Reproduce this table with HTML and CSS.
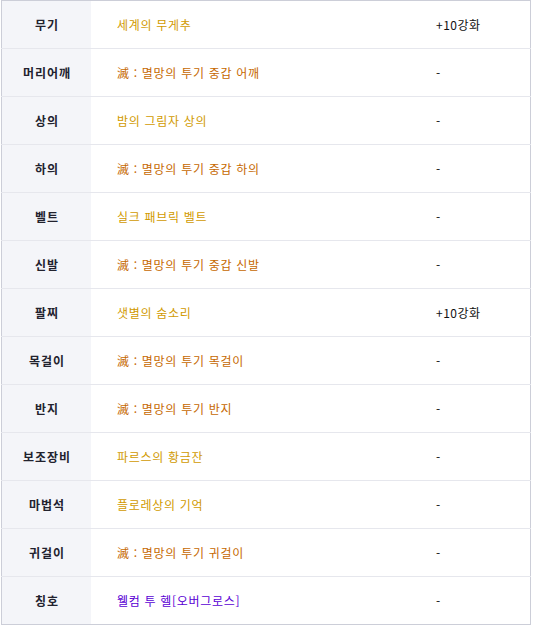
FILE: index.html
```html
<!DOCTYPE html>
<html lang="ko">
<head>
<meta charset="utf-8">
<link rel="stylesheet" href="styles.css">
</head>
<body>
<table class="equip">
  <tbody>
    <tr><th>무기</th><td class="item unique">세계의 무게추</td><td class="val">+10강화</td></tr>
    <tr><th>머리어깨</th><td class="item epic">滅 : 멸망의 투기 중갑 어깨</td><td class="val">-</td></tr>
    <tr><th>상의</th><td class="item unique">밤의 그림자 상의</td><td class="val">-</td></tr>
    <tr><th>하의</th><td class="item epic">滅 : 멸망의 투기 중갑 하의</td><td class="val">-</td></tr>
    <tr><th>벨트</th><td class="item unique">실크 패브릭 벨트</td><td class="val">-</td></tr>
    <tr><th>신발</th><td class="item epic">滅 : 멸망의 투기 중갑 신발</td><td class="val">-</td></tr>
    <tr><th>팔찌</th><td class="item unique">샛별의 숨소리</td><td class="val">+10강화</td></tr>
    <tr><th>목걸이</th><td class="item epic">滅 : 멸망의 투기 목걸이</td><td class="val">-</td></tr>
    <tr><th>반지</th><td class="item epic">滅 : 멸망의 투기 반지</td><td class="val">-</td></tr>
    <tr><th>보조장비</th><td class="item unique">파르스의 황금잔</td><td class="val">-</td></tr>
    <tr><th>마법석</th><td class="item unique">플로레상의 기억</td><td class="val">-</td></tr>
    <tr><th>귀걸이</th><td class="item epic">滅 : 멸망의 투기 귀걸이</td><td class="val">-</td></tr>
    <tr><th>칭호</th><td class="item title">웰컴 투 헬[오버그로스]</td><td class="val">-</td></tr>
  </tbody>
</table>
</body>
</html>
```
FILE: styles.css
```css
html, body {
  margin: 0;
  padding: 0;
  background: #ffffff;
}
body {
  padding-left: 1px;
  font-family: "Noto Sans CJK KR", "Noto Sans", sans-serif;
  font-size: 12px;
}
.equip {
  border-collapse: collapse;
  width: 530px;
  border: 1px solid #ccced8;
  table-layout: fixed;
}
.equip tr {
  height: 48px;
  border-bottom: 1px solid #e6e7ed;
}
.equip tr:last-child {
  border-bottom: 1px solid #ccced8;
}
.equip th {
  width: 88px;
  background: #f4f5f9;
  color: #22222e;
  font-weight: 700;
  font-size: 12px;
  letter-spacing: 1px;
  text-align: center;
  padding: 0 0 0 1px;
}
.equip td {
  padding: 0;
  vertical-align: middle;
  letter-spacing: 0.7px;
}
.item {
  width: 319px;
  padding-left: 26px !important;
}
.val {
  color: #111;
  letter-spacing: 0.5px !important;
}
.unique { color: #d19a00; }
.epic { color: #c66800; }
.title { color: #5a00d4; }
```
